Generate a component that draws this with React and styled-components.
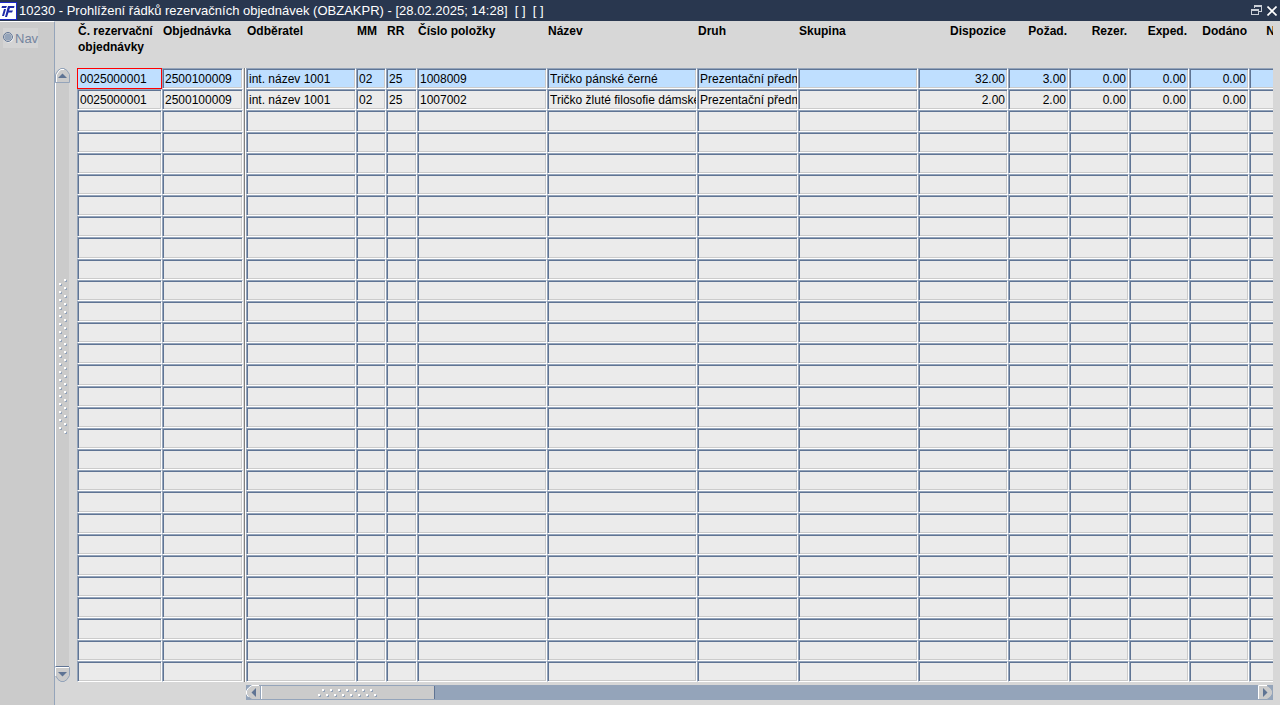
import React from 'react'
import styled, { createGlobalStyle } from 'styled-components'

const GlobalStyle = createGlobalStyle`
  * {
    box-sizing: border-box;
  }

  body {
    margin: 0;
    background: #d7d7d7;
    color: #000;
    font-family: "Liberation Sans", Arial, sans-serif;
    font-size: 12px;
  }

  button, input {
    font: inherit;
    color: inherit;
    margin: 0;
    padding: 0;
  }

  svg {
    flex: none;
  }
`
const Screen = styled.div`
  display: flex;
  flex-direction: column;
  height: 100vh;
  overflow: hidden;
`
const TitleBar = styled.header`
  display: flex;
  align-items: center;
  flex: none;
  height: 21px;
  background: #29374f;
  color: #fff;
`
const Title = styled.h1`
  flex: 1;
  margin: 0 0 0 2px;
  font-size: 13px;
  line-height: 20px;
  font-weight: normal;
  white-space: pre;
`
const WindowButton = styled.button`
  display: flex;
  align-items: center;
  justify-content: center;
  width: 16px;
  height: 20px;
  border: none;
  background: none;
`
const Body = styled.div`
  display: flex;
  flex: 1;
  min-height: 0;
`
const NavPanel = styled.nav`
  flex: none;
  width: 55px;
  padding: 6px 0 0 3px;
  background: #cbcbcb;
  border-top: 1px solid #fff;
  border-right: 1px solid #94a4ba;
`
const NavButton = styled.button`
  display: flex;
  align-items: center;
  gap: 1px;
  width: 35px;
  height: 20px;
  border: none;
  background: #d4d4d4;
  color: #74859f;
  font-size: 13px;
`
const VerticalBar = styled.div`
  display: flex;
  flex-direction: column;
  flex: none;
  width: 16px;
  height: calc(100vh - 91px);
  margin-top: 47px;
`
const VerticalTrack = styled.div`
  display: flex;
  flex: 1;
  align-items: center;
  margin-right: 2px;
  padding: 0 0 36px 3px;
  background: #cbcbcb;
  border-left: 1px solid #fff;
  border-bottom: 1px solid #5f7494;
`
const ArrowButton = styled.button`
  display: flex;
  flex: none;
  width: 15px;
  height: 15px;
  border: none;
  background: none;
`
const Grid = styled.main`
  display: flex;
  flex: 1;
  min-width: 0;
  padding: 0 7px 4px 6px;
`
const FrozenPane = styled.section`
  flex: none;
  width: 167px;
`
const Divider = styled.div`
  flex: none;
  width: 2px;
  height: calc(100vh - 91px);
  margin-top: 47px;
  border-left: 1px solid #808080;
  border-right: 1px solid #fff;
`
const ScrollPane = styled.section`
  flex: 1;
  min-width: 0;
  overflow: hidden;
`
const Table = styled.table`
  width: ${(props) => props.$width}px;
  height: calc(100vh - 44px);
  table-layout: fixed;
  border-collapse: separate;
  border-spacing: 0;
`
const HeadCell = styled.th`
  height: 47px;
  padding: 2px 2px 0 1px;
  text-align: ${(props) => (props.$right ? 'right' : 'left')};
  vertical-align: top;
  font-size: 12px;
  line-height: 16px;
  white-space: ${(props) => (props.$wrap ? 'normal' : 'nowrap')};
  overflow: hidden;
`
const Cell = styled.td`
  padding: 0;
  background: ${(props) => (props.$current ? '#bfdfff' : '#ebebeb')};
  border-style: solid;
  border-width: 1px;
  border-color: #94a4ba #fff #fff #94a4ba;
  box-shadow: inset 1px 1px #5f7494, inset -1px -1px #cbcbcb;

  &:focus-within {
    border-color: #f00;
    box-shadow: none;
  }
`
const Field = styled.input`
  display: block;
  width: 100%;
  height: 18px;
  padding: 0 ${(props) => (props.$right ? 2 : 0)}px 0 2px;
  border: none;
  outline: none;
  background: transparent;
  font-size: 12px;
  caret-color: transparent;
  text-align: ${(props) => (props.$right ? 'right' : 'left')};
`
const HorizontalBar = styled.div`
  display: flex;
  align-items: center;
  height: 15px;
  margin-top: 3px;
  background: #94a4ba;
`
const Thumb = styled.div`
  display: flex;
  align-items: center;
  justify-content: center;
  width: 174px;
  height: 13px;
  background: #cbcbcb;
  border-left: 1px solid #fff;
  border-right: 1px solid #5f7494;
`
const Spacer = styled.div`
  flex: 1;
`

const frozenColumns = [
  { key: 'rez', label: 'Č. rezervační objednávky', width: 85, wrap: true },
  { key: 'obj', label: 'Objednávka', width: 81 },
]
const columns = [
  { key: 'odb', label: 'Odběratel', width: 110 },
  { key: 'mm', label: 'MM', width: 30 },
  { key: 'rr', label: 'RR', width: 31 },
  { key: 'cislo', label: 'Číslo položky', width: 130 },
  { key: 'nazev', label: 'Název', width: 150 },
  { key: 'druh', label: 'Druh', width: 101 },
  { key: 'skupina', label: 'Skupina', width: 120 },
  { key: 'disp', label: 'Dispozice', width: 90, right: true },
  { key: 'pozad', label: 'Požad.', width: 61, right: true },
  { key: 'rezer', label: 'Rezer.', width: 60, right: true },
  { key: 'exped', label: 'Exped.', width: 60, right: true },
  { key: 'dodano', label: 'Dodáno', width: 60, right: true },
  { key: 'nedod', label: 'Nedod.', width: 60, right: true },
]
const data = [
  {
    rez: '0025000001', obj: '2500100009', odb: 'int. název 1001', mm: '02', rr: '25',
    cislo: '1008009', nazev: 'Tričko pánské černé', druh: 'Prezentační předměty',
    disp: '32.00', pozad: '3.00', rezer: '0.00', exped: '0.00', dodano: '0.00',
  },
  {
    rez: '0025000001', obj: '2500100009', odb: 'int. název 1001', mm: '02', rr: '25',
    cislo: '1007002', nazev: 'Tričko žluté filosofie dámské', druh: 'Prezentační předměty',
    disp: '2.00', pozad: '2.00', rezer: '0.00', exped: '0.00', dodano: '0.00',
  },
]
const rows = Array.from({ length: 29 }, (_, i) => data[i] || {})

const Logo = () => (
  <svg width="17" height="20" viewBox="0 0 17 20" aria-hidden="true">
    <path d="M0 1h17v18H0z" fill="#1d28c8" />
    <path d="M0 2h16v16H0z" fill="#fff" />
    <path d="M2 5h5l-1 2H1.500zM4 8h2l-2 7H2zM8 5h6.500L14 7h-4l-1 2.500h4l-1 2H8.500L7 16H5z" fill="#1d28a8" />
  </svg>
)

const arrows = {
  up: 'M3 10h9L7.500 5.500z',
  down: 'M3 5h9L7.500 9.500z',
  left: 'M10 3v9L5.500 7.500z',
  right: 'M5 3v9l4.500-4.500z',
}
const outlines = {
  up: 'M.5 14.500V6.500L3 2.500 6 .5h3l3 2 2.500 4v8z',
  down: 'M.5.5h14v8L12 12.500l-3 2H6l-3-2-2.500-4z',
  left: 'M14.500.5H6L2.500 3 .5 6v3l2 3L6 14.500h8.500z',
  right: 'M.5.5H9L12.500 3l2 3v3l-2 3L9 14.500H.5z',
}
// lit edges of each button
const highlights = {
  up: 'M1.500 14V7L4 3l2-1.500h3',
  down: 'M14 .5H.5V9',
  left: 'M13 .5H6L2.500 3 .5 6v3l2 3',
  right: 'M9 .5H.5V14',
}
const Arrow = ({ dir, label }) => (
  <ArrowButton aria-label={label}>
    <svg width="15" height="15" viewBox="0 0 15 15" fill="none">
      <path d={outlines[dir]} fill="#cbcbcb" stroke="#94a4ba" />
      <path d={highlights[dir]} stroke="#fff" />
      <path d={arrows[dir]} fill="#5f7494" />
    </svg>
  </ArrowButton>
)

// dotted handle, two staggered lines of raised points
const Grip = ({ count, vertical }) => {
  const long = count * 4
  const dots = Array.from({ length: count }, (_, i) => {
    const along = i * 4
    return vertical ? [i % 2 ? 0 : 5, along] : [along, i % 2 ? 0 : 5]
  })
  return (
    <svg width={vertical ? 8 : long} height={vertical ? long : 8} shapeRendering="crispEdges" aria-hidden="true">
      {dots.map(([x, y]) => (
        <g key={`${x}-${y}`}>
          <rect x={x + 1} y={y + 1} width="2" height="2" fill="#94a4ba" />
          <rect x={x} y={y} width="2" height="2" fill="#fff" />
        </g>
      ))}
    </svg>
  )
}

const DataTable = ({ cols, focusFirst }) => (
  <Table $width={cols.reduce((sum, col) => sum + col.width, 0)}>
    <colgroup>
      {cols.map((col) => <col key={col.key} width={col.width} />)}
    </colgroup>
    <thead>
      <tr>
        {cols.map((col) => (
          <HeadCell key={col.key} scope="col" $right={col.right} $wrap={col.wrap}>{col.label}</HeadCell>
        ))}
      </tr>
    </thead>
    <tbody>
      {rows.map((row, i) => (
        <tr key={i}>
          {cols.map((col, j) => (
            <Cell key={col.key} $current={i === 0}>
              <Field
                aria-label={`${col.label} ${i + 1}`}
                defaultValue={row[col.key] || ''}
                $right={col.right}
                autoFocus={focusFirst && i === 0 && j === 0}
              />
            </Cell>
          ))}
        </tr>
      ))}
    </tbody>
  </Table>
)

const App = () => {
  return (
    <Screen>
      <GlobalStyle />
      <TitleBar>
        <Logo />
        <Title>{'10230 - Prohlížení řádků rezervačních objednávek (OBZAKPR) - [28.02.2025; 14:28]  [ ]  [ ]'}</Title>
        <WindowButton aria-label="Obnovit">
          <svg width="11" height="11" viewBox="0 0 11 11" fill="none" stroke="#c9ced6" shapeRendering="crispEdges">
            <path d="M3.500 3V.5h7v6H8M3 1.500h7M.5 4.500h7v5h-7zM0 5.500h8" />
          </svg>
        </WindowButton>
        <WindowButton aria-label="Zavřít">
          <svg width="10" height="10" viewBox="0 0 10 10" fill="none" stroke="#fff" strokeWidth="1.6">
            <path d="M.5.5l9 9M9.500.5l-9 9" />
          </svg>
        </WindowButton>
      </TitleBar>
      <Body>
        <NavPanel>
          <NavButton>
            <svg width="11" height="14" viewBox="0 0 11 14" aria-hidden="true">
              <circle cx="5.500" cy="6.500" r="5" fill="#fff" />
              <circle cx="5" cy="6" r="4.500" fill="#d4d4d4" stroke="#5f7494" />
              <circle cx="5" cy="6" r="3.500" fill="#94a4ba" />
            </svg>
            Nav
          </NavButton>
        </NavPanel>
        <VerticalBar>
          <Arrow dir="up" label="Nahoru" />
          <VerticalTrack>
            <Grip count={39} vertical />
          </VerticalTrack>
          <Arrow dir="down" label="Dolů" />
        </VerticalBar>
        <Grid>
          <FrozenPane>
            <DataTable cols={frozenColumns} focusFirst />
          </FrozenPane>
          <Divider />
          <ScrollPane>
            <DataTable cols={columns} />
            <HorizontalBar>
              <Arrow dir="left" label="Vlevo" />
              <Thumb>
                <Grip count={15} />
              </Thumb>
              <Spacer />
              <Arrow dir="right" label="Vpravo" />
            </HorizontalBar>
          </ScrollPane>
        </Grid>
      </Body>
    </Screen>
  )
}

export default App
